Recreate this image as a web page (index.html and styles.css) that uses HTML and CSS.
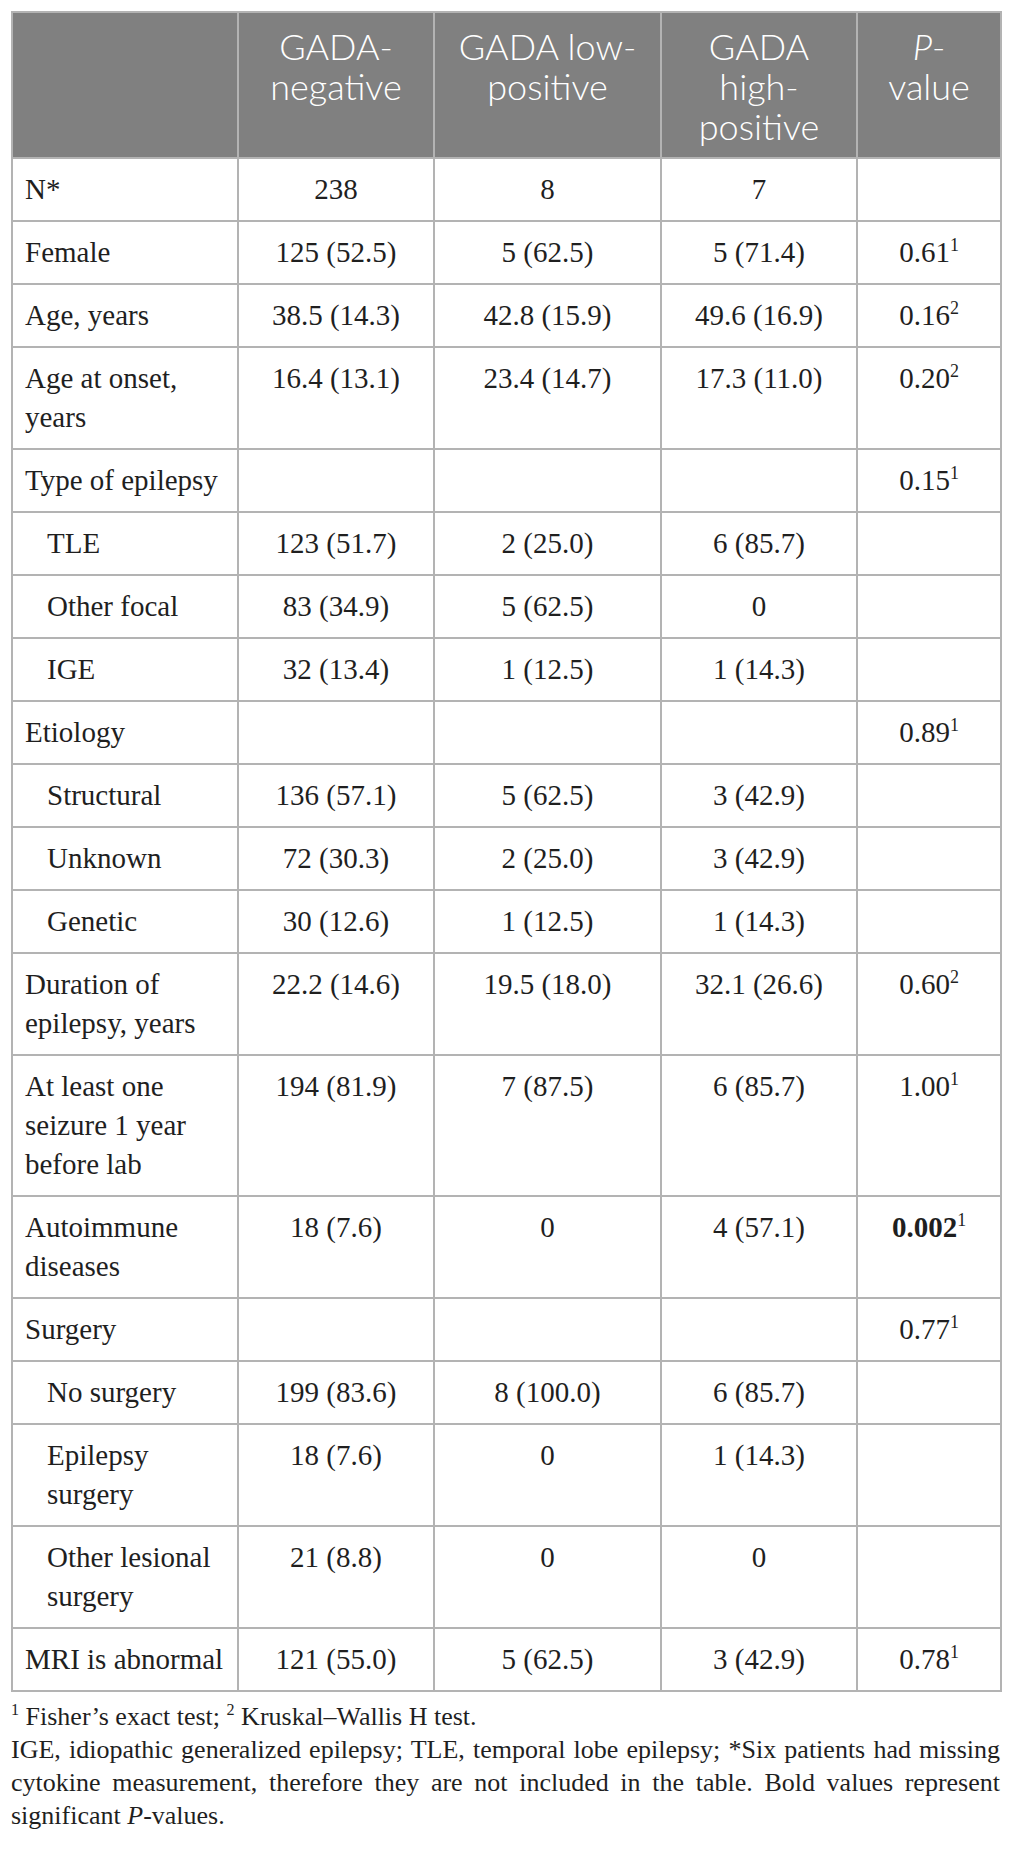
FILE: index.html
```html
<!DOCTYPE html>
<html lang="en">
<head>
    <meta charset="UTF-8">
    <meta name="viewport" content="width=device-width, initial-scale=1.0">
    <title>GADA groups - patient characteristics</title>
    <link rel="stylesheet" href="styles.css">
</head>
<body>
    <table class="data-table">
        <colgroup>
            <col class="col-label">
            <col class="col-neg">
            <col class="col-low">
            <col class="col-high">
            <col class="col-p">
        </colgroup>
        <thead>
            <tr>
                <th></th>
                <th>GADA-negative</th>
                <th>GADA low-positive</th>
                <th>GADA high-positive</th>
                <th><i>P</i>-value</th>
            </tr>
        </thead>
        <tbody>
            <tr><td>N*</td><td>238</td><td>8</td><td>7</td><td></td></tr>
            <tr><td>Female</td><td>125 (52.5)</td><td>5 (62.5)</td><td>5 (71.4)</td><td>0.61<sup>1</sup></td></tr>
            <tr><td>Age, years</td><td>38.5 (14.3)</td><td>42.8 (15.9)</td><td>49.6 (16.9)</td><td>0.16<sup>2</sup></td></tr>
            <tr><td>Age at onset, years</td><td>16.4 (13.1)</td><td>23.4 (14.7)</td><td>17.3 (11.0)</td><td>0.20<sup>2</sup></td></tr>
            <tr><td>Type of epilepsy</td><td></td><td></td><td></td><td>0.15<sup>1</sup></td></tr>
            <tr><td class="sub">TLE</td><td>123 (51.7)</td><td>2 (25.0)</td><td>6 (85.7)</td><td></td></tr>
            <tr><td class="sub">Other focal</td><td>83 (34.9)</td><td>5 (62.5)</td><td>0</td><td></td></tr>
            <tr><td class="sub">IGE</td><td>32 (13.4)</td><td>1 (12.5)</td><td>1 (14.3)</td><td></td></tr>
            <tr><td>Etiology</td><td></td><td></td><td></td><td>0.89<sup>1</sup></td></tr>
            <tr><td class="sub">Structural</td><td>136 (57.1)</td><td>5 (62.5)</td><td>3 (42.9)</td><td></td></tr>
            <tr><td class="sub">Unknown</td><td>72 (30.3)</td><td>2 (25.0)</td><td>3 (42.9)</td><td></td></tr>
            <tr><td class="sub">Genetic</td><td>30 (12.6)</td><td>1 (12.5)</td><td>1 (14.3)</td><td></td></tr>
            <tr><td>Duration of epilepsy, years</td><td>22.2 (14.6)</td><td>19.5 (18.0)</td><td>32.1 (26.6)</td><td>0.60<sup>2</sup></td></tr>
            <tr><td>At least one seizure 1 year before lab</td><td>194 (81.9)</td><td>7 (87.5)</td><td>6 (85.7)</td><td>1.00<sup>1</sup></td></tr>
            <tr><td>Autoimmune diseases</td><td>18 (7.6)</td><td>0</td><td>4 (57.1)</td><td><b>0.002</b><sup>1</sup></td></tr>
            <tr><td>Surgery</td><td></td><td></td><td></td><td>0.77<sup>1</sup></td></tr>
            <tr><td class="sub">No surgery</td><td>199 (83.6)</td><td>8 (100.0)</td><td>6 (85.7)</td><td></td></tr>
            <tr><td class="sub">Epilepsy surgery</td><td>18 (7.6)</td><td>0</td><td>1 (14.3)</td><td></td></tr>
            <tr><td class="sub">Other lesional surgery</td><td>21 (8.8)</td><td>0</td><td>0</td><td></td></tr>
            <tr><td>MRI is abnormal</td><td>121 (55.0)</td><td>5 (62.5)</td><td>3 (42.9)</td><td>0.78<sup>1</sup></td></tr>
        </tbody>
    </table>

    <!-- Table notes -->
    <div class="notes">
        <p><sup>1</sup>&nbsp;Fisher&rsquo;s exact test; <sup>2</sup>&nbsp;Kruskal&ndash;Wallis H test.</p>
        <p>IGE, idiopathic generalized epilepsy; TLE, temporal lobe epilepsy; *Six patients had missing cytokine measurement, therefore they are not included in the table. Bold values represent significant <i>P</i>-values.</p>
    </div>
</body>
</html>
```

FILE: styles.css
```css
body {
    margin: 0;
    padding: 11px 13px 20px 11px;
    background-color: #fff;
    color: #1f1f1f;
    font-family: "Liberation Serif", "Times New Roman", serif;
}
.data-table {
    width: 989px;
    border-collapse: collapse;
    table-layout: fixed;
}
.col-label { width: 226px; }
.col-neg { width: 196px; }
.col-low { width: 227px; }
.col-high { width: 196px; }
.col-p { width: 144px; }

.data-table th,
.data-table td {
    border: 2px solid #b3b3b3;
    vertical-align: top;
}
.data-table th {
    background-color: #808080;
    color: #fff;
    font-family: Lato, "Open Sans", sans-serif;
    font-weight: 300;
    font-size: 36px;
    line-height: 40px;
    padding: 13px 16px 11px;
    text-align: center;
}
.data-table td {
    font-size: 29px;
    line-height: 39px;
    padding: 11px 10px;
    text-align: center;
}
.data-table td:first-child {
    text-align: left;
    padding-left: 12px;
}
.data-table td.sub {
    padding-left: 34px;
}
sup {
    font-size: 0.62em;
    line-height: 0;
    vertical-align: 0.62em;
}
/* Notes under the table */
.notes {
    margin-top: 8px;
    font-size: 26px;
    line-height: 33px;
    text-align: justify;
}
.notes p {
    margin: 0;
}
```
